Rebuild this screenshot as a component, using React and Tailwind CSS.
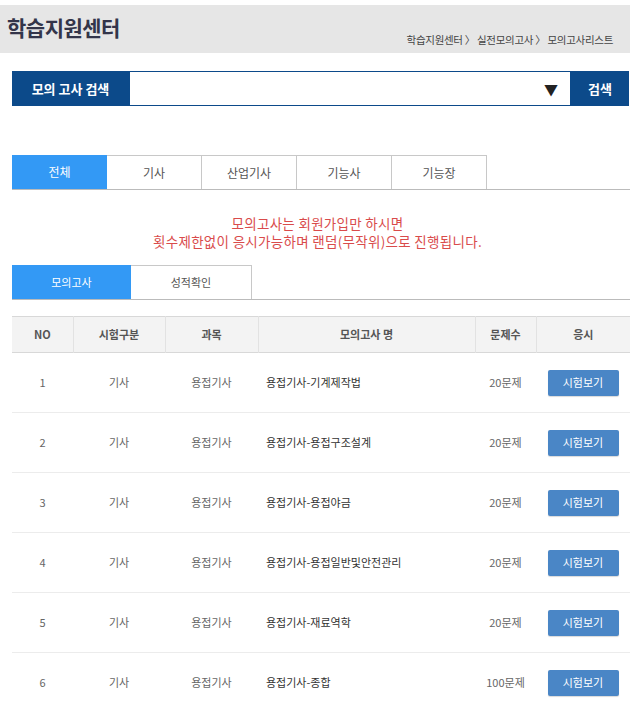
import { useState } from "react";

const rows = [
  { no: 1, type: "기사", subject: "용접기사", name: "용접기사-기계제작법", count: "20문제" },
  { no: 2, type: "기사", subject: "용접기사", name: "용접기사-용접구조설계", count: "20문제" },
  { no: 3, type: "기사", subject: "용접기사", name: "용접기사-용접야금", count: "20문제" },
  { no: 4, type: "기사", subject: "용접기사", name: "용접기사-용접일반및안전관리", count: "20문제" },
  { no: 5, type: "기사", subject: "용접기사", name: "용접기사-재료역학", count: "20문제" },
  { no: 6, type: "기사", subject: "용접기사", name: "용접기사-종합", count: "100문제" },
];

const levels = ["전체", "기사", "산업기사", "기능사", "기능장"];

function App() {
  const [level, setLevel] = useState("전체");
  const [tab, setTab] = useState("모의고사");

  return (
    <div className="w-[635px] bg-white pt-[5px] text-[#333]" style={{ fontFamily: '"Noto Sans CJK KR", "Noto Sans", sans-serif' }}>
      {/* title bar */}
      <header className="flex h-[48px] w-[630px] items-start justify-between bg-[#e6e6e6] pl-[7px] pr-[17px]">
        <h1 className="mt-[8px] text-[21px] font-bold leading-[28px] tracking-[-0.5px] text-[#33354a]">학습지원센터</h1>
        <p className="mt-[28px] text-[10.5px] leading-[14px] tracking-[-0.3px] text-[#444]">
          학습지원센터 〉 실전모의고사 〉 모의고사리스트
        </p>
      </header>

      {/* search */}
      <div className="ml-[12px] mt-[18px] flex h-[35px] w-[617px]">
        <div className="flex w-[117px] items-center justify-center bg-[#0c4a8a] text-[13px] font-bold text-white">모의 고사 검색</div>
        <div className="flex flex-1 items-center justify-end border border-[#0c4a8a] bg-white pr-[12px]">
          <span className="text-[14px] leading-none text-[#222]">▼</span>
        </div>
        <button className="w-[58px] bg-[#0c4a8a] text-[13px] font-bold text-white">검색</button>
      </div>

      {/* level tabs */}
      <div className="ml-[12px] mt-[49px] flex h-[35px] w-[618px] border-b border-[#bbb]">
        {levels.map((l) => (
          <button
            key={l}
            onClick={() => setLevel(l)}
            className={
              l === level
                ? "w-[95px] bg-[#3399f5] text-[12px] text-white"
                : "w-[95px] border-t border-r border-[#c8c8c8] bg-white text-[12px] text-[#555]"
            }
          >
            {l}
          </button>
        ))}
      </div>

      <p className="mt-[24px] text-center text-[13.5px] leading-[18px] tracking-[0.3px] text-[#d94b4b]">
        모의고사는 회원가입만 하시면
        <br />
        횟수제한없이 응시가능하며 랜덤(무작위)으로 진행됩니다.
      </p>

      {/* sub tabs */}
      <div className="ml-[12px] mt-[15px] flex h-[35px] w-[618px] border-b border-[#bbb]">
        {["모의고사", "성적확인"].map((t) => (
          <button
            key={t}
            onClick={() => setTab(t)}
            className={
              t === tab
                ? "w-[119px] bg-[#3399f5] text-[11px] text-white"
                : "w-[121px] border-t border-r border-[#c8c8c8] bg-white text-[11px] text-[#555]"
            }
          >
            {t}
          </button>
        ))}
      </div>

      {/* table */}
      <table className="ml-[12px] mt-[16px] w-[618px] border-collapse text-[11px]">
        <thead>
          <tr className="h-[36px] border-t border-b border-[#d8d8d8] bg-[#f3f3f3] text-[11px] font-bold text-[#555]">
            <th className="w-[61px] font-bold">NO</th>
            <th className="w-[92px] border-l border-[#e2e2e2] font-bold">시험구분</th>
            <th className="w-[93px] border-l border-[#e2e2e2] font-bold">과목</th>
            <th className="w-[217px] border-l border-[#e2e2e2] font-bold">모의고사 명</th>
            <th className="w-[61px] border-l border-[#e2e2e2] font-bold">문제수</th>
            <th className="border-l border-[#e2e2e2] font-bold">응시</th>
          </tr>
        </thead>
        <tbody>
          {rows.map((r) => (
            <tr key={r.no} className="h-[60px] border-b border-[#ececec] text-[#666]">
              <td className="text-center">{r.no}</td>
              <td className="text-center">{r.type}</td>
              <td className="text-center">{r.subject}</td>
              <td className="pl-[8px] text-[#333]">{r.name}</td>
              <td className="text-center">{r.count}</td>
              <td className="text-center">
                <button className="h-[26px] w-[71px] rounded-[2px] bg-[#4a86c6] text-[11px] text-white shadow-[0_1px_1px_rgba(0,0,0,0.15)]">
                  시험보기
                </button>
              </td>
            </tr>
          ))}
        </tbody>
      </table>
    </div>
  );
}

export default App;
